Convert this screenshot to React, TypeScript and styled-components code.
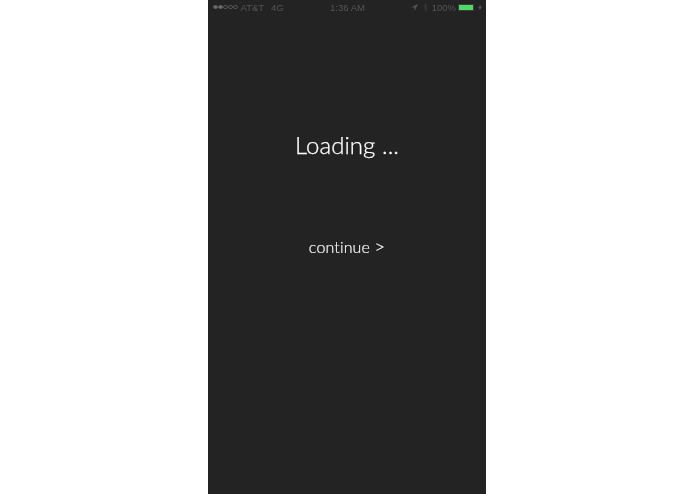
import React from 'react';
import styled, { createGlobalStyle } from 'styled-components';

const GlobalStyle = createGlobalStyle`
	html, body, #root {
		margin: 0;
		height: 100%;
		background: #fff;
	}
`;

const Page = styled.div`
	display: flex;
	justify-content: center;
	height: 494px;
	overflow: hidden;
	padding-right: 1px;
`;

const Phone = styled.div`
	display: flex;
	flex-direction: column;
	width: 278px;
	height: 100%;
	background: #232323;
	color: #fff;
	font-family: Lato, 'Open Sans', sans-serif;
`;

const StatusBar = styled.div`
	display: grid;
	grid-template-columns: 1fr auto 1fr;
	align-items: center;
	height: 14px;
	padding: 0 4px 0 5px;
	font-size: 9.5px;
	color: #555;
	font-family: 'Liberation Sans', sans-serif;
	filter: blur(0.35px);
`;

const StatusLeft = styled.div`
	display: flex;
	align-items: center;
	gap: 3px;
`;

const StatusRight = styled.div`
	display: flex;
	align-items: center;
	justify-content: flex-end;
	gap: 3px;
`;

const Signal = styled.div`
	display: flex;
	gap: 0.5px;
`;

const Dot = styled.span<{ $on?: boolean }>`
	width: 4.5px;
	height: 4.5px;
	box-sizing: border-box;
	border-radius: 50%;
	border: 0.5px solid #555;
	background: ${({ $on }) => ($on ? '#707070' : 'transparent')};
`;

const Carrier = styled.span`
	margin-right: 4px;
`;

const BluetoothIcon = styled.svg`
	margin: 0 1px 0 2px;
`;

const BatteryLevel = styled.span`
	margin-right: -1px;
`;

const Battery = styled.div`
	width: 16px;
	height: 7px;
	margin-right: 1px;
	box-sizing: border-box;
	background: #4cd964;
	border: 1px solid #3c3c3c;
`;

const Title = styled.h1`
	margin: 116px 0 0;
	font-size: 24px;
	line-height: 30px;
	font-weight: 300;
	text-align: center;
	letter-spacing: 0.05px;
	-webkit-text-stroke: 0.25px #fff;
	filter: blur(0.2px);
`;

const ContinueLink = styled.div`
	margin-top: 77px;
	font-size: 16px;
	line-height: 20px;
	font-weight: 300;
	text-align: center;
	letter-spacing: 0.15px;
	-webkit-text-stroke: 0.2px #fff;
	filter: blur(0.2px);
`;

const Chevron = styled.span`
	font-size: 18px;
	line-height: 1;
`;

const App = () => (
	<Page>
		<GlobalStyle />
		<Phone>
			<StatusBar>
				<StatusLeft>
					<Signal>
						<Dot $on />
						<Dot $on />
						<Dot />
						<Dot />
						<Dot />
					</Signal>
					<Carrier>AT&amp;T</Carrier>
					<span>4G</span>
				</StatusLeft>
				<span>1:36 AM</span>
				<StatusRight>
					<svg width="7" height="7" viewBox="0 0 10 10">
						<path d="M10 0 L0 5 L5 5 L5 10 Z" fill="#555" />
					</svg>
					<BluetoothIcon width="5" height="8" viewBox="0 0 6 10">
						<path d="M0.5 2.5 L5 7 L3 9.5 L3 0.5 L5 3 L0.5 7.5" fill="none" stroke="#3c3c3c" />
					</BluetoothIcon>
					<BatteryLevel>100%</BatteryLevel>
					<Battery />
					<svg width="4" height="7" viewBox="0 0 6 10">
						<path d="M4 0 L0 6 L2.5 6 L2 10 L6 4 L3.5 4 Z" fill="#555" />
					</svg>
				</StatusRight>
			</StatusBar>
			<Title>Loading ...</Title>
			<ContinueLink>
				continue <Chevron>&gt;</Chevron>
			</ContinueLink>
		</Phone>
	</Page>
);

export default App;
